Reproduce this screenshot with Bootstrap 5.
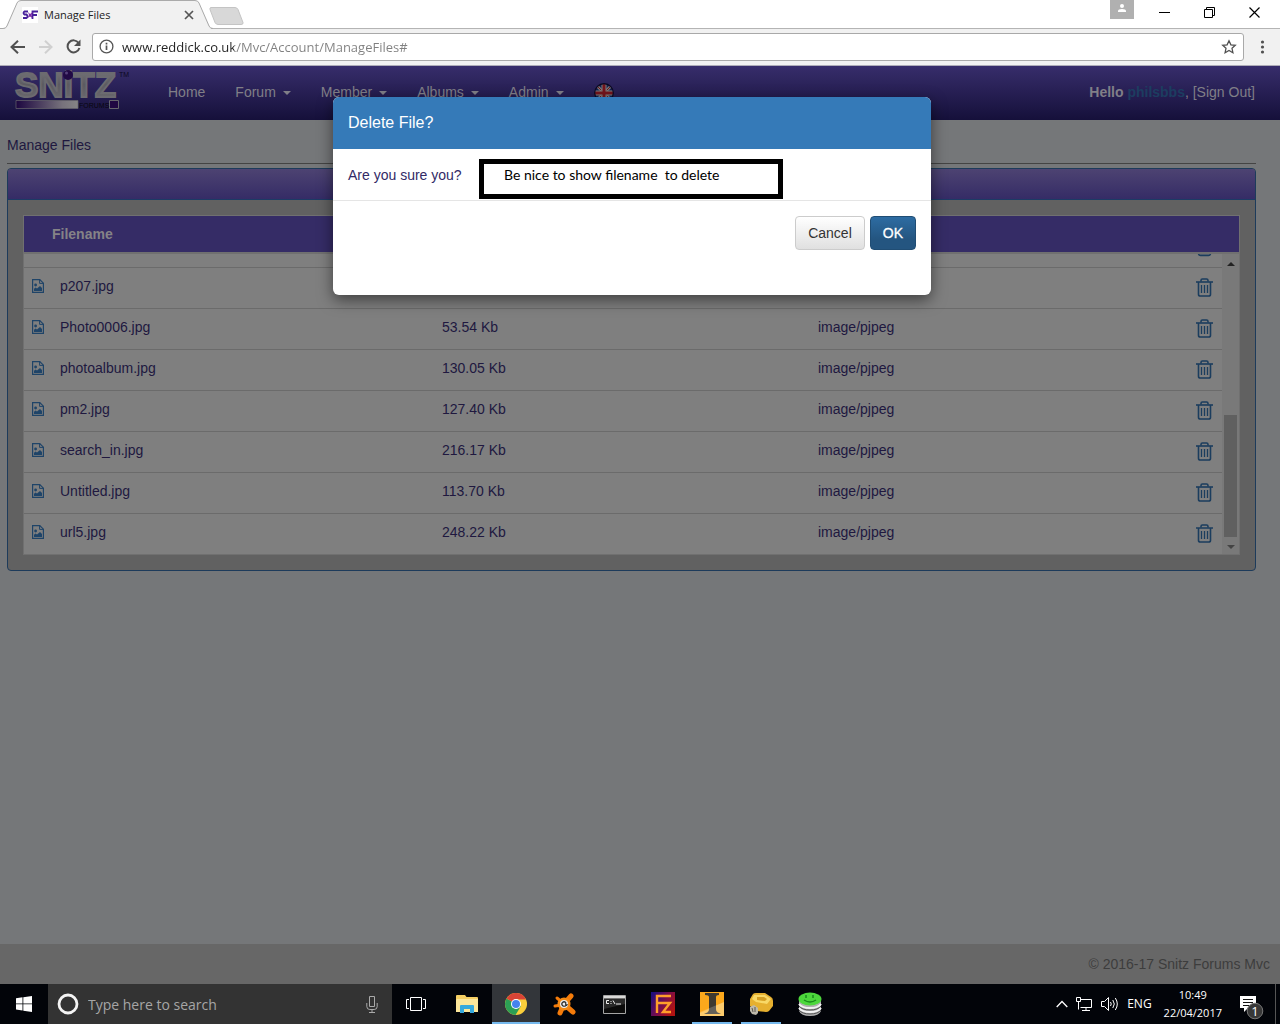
<!DOCTYPE html>
<html lang="en">
<head>
<meta charset="utf-8">
<meta name="viewport" content="width=device-width, initial-scale=1">
<title>Manage Files</title>
<link href="https://cdn.jsdelivr.net/npm/bootstrap@5.3.0/dist/css/bootstrap.min.css" rel="stylesheet">
<style>
body{font:14px/20px "Liberation Sans",Arial,sans-serif;color:#20183f;background:#757779}
svg{display:block;flex:none}
button{font:inherit}
.plain{background:none;border:0;padding:0;color:inherit}
.ui{font-family:"Open Sans","Noto Sans",sans-serif}
/* browser frame */
.tabstrip{height:29px;background:#fff;border-bottom:1px solid #b4b4b4;position:relative}
.tabshape{position:absolute;left:0;top:0}
.tabcontent{position:relative;padding-left:22px;width:194px;height:29px;gap:6px;font-size:11px;color:#222}
.winbtns{padding-right:20px;gap:25px;color:#000}
.winset{gap:34px;padding-bottom:3px}
.profile{background:#b0b0b0;width:24px;height:19px}
.toolbar{height:37px;background:#f1f1f1;border-bottom:1px solid #aeacb8;padding:0 15px 1px 10px}
.navset{gap:13px;padding-right:10px}
.address{height:28px;background:#fff;border:1px solid #a9a9a9;border-radius:3px;padding:0 6px}
.address input{border:0;outline:0;padding:0;font-size:13px;line-height:20px;color:transparent;background:linear-gradient(90deg,#222 112px,#808080 112px);-webkit-background-clip:text;background-clip:text}
/* site */
.sitebar{height:54px;background:linear-gradient(#372d6b,#15103a);padding:0 25px 2px 14px}
.sitebar .logo{margin-right:23px}
.sitebar .logo svg{overflow:visible}
.sitebar .nav-link{color:#807f87;padding:0 15px;line-height:20px}
.sitebar .dropdown-toggle::after{border-top-width:4px;border-left-width:4px;border-right-width:4px;margin-left:7px;vertical-align:2px}
.who,.who a{color:#807f87;text-decoration:none}
.who .user{color:#1c3d60}
.content{padding:15px 24px 0 7px}
.pagehead{font-size:14px;line-height:20px;margin:0;padding-bottom:8px;border-bottom:1px solid #444;font-weight:400}
.panel{border:1px solid #1d3b5b;border-radius:4px;background:#616161;margin-top:4px;overflow:hidden}
.panelbar{height:31px;background:linear-gradient(#4d4372,#352c66);border-bottom:1px solid #1d3b66}
.filebox{margin:15px;border:1px solid #707070;background:#7f7f7f}
.filebox table{margin:0;width:100%;table-layout:fixed}
.filehead{border-bottom:2px solid #707070}
.filehead th{background:#352c66;color:#858387;height:37px;padding:0 0 0 28px}
.filerows td{height:41px;padding:0 8px;border-bottom:1px solid #6b6b6b;line-height:20px;vertical-align:middle}
.filerows td:last-child{padding-right:9px}
.filerows td:not(:last-child){padding-bottom:4px}
.filerows tr:last-child td{border-bottom:0}
.filerows tr.cut td{height:13px;padding-top:0;padding-bottom:0;vertical-align:top}
.c1{width:28px}.c2{width:382px}.c3{width:376px}
.scroller{width:17px;background:#797979;padding:8px 2px 5px}
.thumb{width:13px;height:122px;background:#606060}
.sitefoot{height:40px;background:#676767;color:#3d3d3d;padding-right:10px}
/* dialog */
.dialoglayer{position:absolute;top:31px;left:0;right:0;padding-right:16px;z-index:5}
.dialogbox{max-width:598px;width:100%}
.dialogbox .modal-content{border:0;border-radius:6px;box-shadow:0 5px 15px rgba(0,0,0,.5);min-height:198px;color:#322a66;background:#fff;overflow:hidden}
.dialogbox .modal-header{background:#357ab8;color:#fff;padding:15px;height:52px;border:0;border-radius:0}
.dialogbox .modal-title{font-size:16px;line-height:22px;font-weight:400}
.dialogbox .modal-body{padding:16px 15px 15px;flex:none}
.dialogbox .modal-footer{padding:15px;gap:5px;border-top:1px solid #e5e5e5}
.dialogbox .modal-footer>*{margin:0}
.dialogbox .btn{font-size:14px;line-height:20px;padding:6px 12px;border-radius:4px}
.btn-soft{background:linear-gradient(#fff,#e0e0e0);border:1px solid #ccc;color:#333}
.btn-deep{background:linear-gradient(#2d6ca2,#245580 70%);border:1px solid #204d74;color:#fff;-webkit-text-stroke:.3px #fff}
.note{position:absolute;left:146px;top:62px;width:304px;height:40px;border:5px solid #000;background:#fff;color:#000;font:14px/22px Lato,sans-serif;padding-left:20px;white-space:pre}
/* taskbar */
.taskbar{height:40px;background:#020409;color:#fff}
.startbtn{width:48px}
.searchbox{width:344px;background:#333;gap:9px;padding:0 14px 0 9px}
.searchbox input{background:none;border:0;outline:0;padding:2px 0 0;font-size:14px;color:#fff}
.searchbox input::placeholder{color:#a6a6a6;opacity:1}
.slot{width:48px;height:40px;display:flex;align-items:center;justify-content:center}
.slot.open{background:linear-gradient(#76b9ed,#76b9ed) bottom/40px 2px no-repeat}
.slot.active{background:linear-gradient(#76b9ed,#76b9ed) bottom/48px 2px no-repeat #33363a}
.slots{gap:1px;margin-left:3px}
.tray{gap:8px}
.lang{font-size:12px;padding-right:4px}
.clock{font-size:11px;line-height:18px;padding-right:9px}
.notify{margin-top:8px}
.peek{width:1px;height:40px;background:#555;margin-right:4px}
</style>
<script src="https://cdn.jsdelivr.net/npm/bootstrap@5.3.0/dist/js/bootstrap.bundle.min.js"></script>
</head>
<body class="d-flex flex-column min-vh-100">
<svg width="0" height="0" class="position-absolute">
<defs>
<symbol id="pic" viewBox="0 0 12 14"><path d="M.6.6h7.2l3.6 3.6v9.2H.6z" fill="none" stroke="#1f4468" stroke-width="1.2"/><path d="M7.6.6v3.8h3.8" fill="none" stroke="#1f4468"/><circle cx="3.6" cy="6" r="1.4" fill="#1f4468"/><path d="M2 12V9.8l1.6-1.2 1.4 1L8 7l2 2v3z" fill="#1f4468"/></symbol>
<symbol id="bin" viewBox="0 0 17 19"><g fill="none" stroke="#1b3d5e"><path d="M0 4h17" stroke-width="1.6"/><path d="M5 3.6V2.4Q5 1 6.400 1h4.200Q12 1 12 2.400v1.200M2.500 4v12.200q0 1.800 1.800 1.800h8.400q1.800 0 1.800-1.800V4" stroke-width="1.6"/><path d="M5.500 7v8M8.500 7v8M11.500 7v8" stroke-width="1.300"/></g></symbol>
</defs>
</svg>

<header class="ui">
<div class="tabstrip d-flex justify-content-between">
<svg class="tabshape" width="250" height="29"><path d="M0 28.500h5L17 3Q18 .5 21 .5H195Q198 .5 199 3L211 28.500V29H0z" fill="#f1f1f1"/><path d="M0 28.500h3Q6 28.500 7 26L17 3Q18 .5 21 .5H195Q198 .5 199 3L209 26Q210 28.500 213 28.500" fill="none" stroke="#aaa"/><path d="M211 7.500h24q2 0 3 2l5 13q.5 2-2 2h-23q-2 0-3-2l-5-13q-.5-2 1-2z" fill="#d8d8d8" stroke="#c4c4c4"/></svg>
<div class="tabcontent d-flex align-items-center">
<svg width="16" height="16"><path fill="#fff" d="M0 0h16v16H0z"/><path d="M6 4.500H2.500q-2 1.500 0 3h2q2 2 0 3.500H1M10.500 12V4.500H16M10.500 8H15" fill="none" stroke="#46209a" stroke-width="1.800"/><path d="M6 5l2 2 3-2-1.500 3 1 3-2.500-1.500L5.500 11 7 8z" fill="#7a2aa8"/></svg>
<span class="flex-grow-1 text-truncate">Manage Files</span>
<button class="plain" aria-label="Close tab"><svg width="10" height="10"><path d="M1 1l8 8M9 1L1 9" stroke="#555" stroke-width="1.700"/></svg></button>
</div>
<div class="winbtns d-flex align-items-center">
<button class="plain profile align-self-start" aria-label="Profile"><svg width="24" height="19"><circle cx="12" cy="6" r="2" fill="#fff"/><path d="M8 12v-1q0-2 4-2t4 2v1z" fill="#fff"/></svg></button>
<div class="winset d-flex align-items-center">
<button class="plain" aria-label="Minimise"><svg width="11" height="11"><path d="M0 5.500h11" stroke="#000"/></svg></button>
<button class="plain" aria-label="Restore"><svg width="11" height="11"><path d="M.5 2.500h8v8h-8zM2.500 2.500v-2h8v8h-2" fill="none" stroke="#000"/></svg></button>
<button class="plain" aria-label="Close"><svg width="11" height="11"><path d="M.5.5l10 10M10.500.5l-10 10" stroke="#000" stroke-width="1.200"/></svg></button>
</div>
</div>
</div>
<div class="toolbar d-flex align-items-center">
<div class="navset d-flex align-items-center">
<button class="plain" aria-label="Back"><svg width="15" height="14"><path d="M15 7H2M8 .8L1.500 7 8 13.200" fill="none" stroke="#505050" stroke-width="2"/></svg></button>
<button class="plain" aria-label="Forward"><svg width="15" height="14"><path d="M1 7h12M7 .8L13.500 7 7 13.200" fill="none" stroke="#d0d0d0" stroke-width="2"/></svg></button>
<button class="plain" aria-label="Reload"><svg width="16" height="15"><path d="M12.600 4A6 6 0 1 0 13.400 9" fill="none" stroke="#505050" stroke-width="2"/><path d="M14.500.5V7H8z" fill="#505050"/></svg></button>
</div>
<div class="address d-flex align-items-center flex-grow-1">
<svg width="15" height="15" class="me-2"><circle cx="7.500" cy="7.500" r="6.400" fill="none" stroke="#555" stroke-width="1.300"/><path d="M7.500 6.500V11M7.500 3.700v1.700" stroke="#555" stroke-width="1.700"/></svg>
<input class="ui flex-grow-1" type="text" aria-label="Address" value="www.reddick.co.uk/Mvc/Account/ManageFiles#">
<button class="plain" aria-label="Bookmark"><svg width="16" height="16"><path d="M8 1.800l1.900 4 4.400.5-3.300 3 .9 4.400L8 11.500l-3.900 2.200.9-4.400-3.300-3 4.400-.5z" fill="none" stroke="#505050" stroke-width="1.300"/></svg></button>
</div>
<button class="plain ms-3" aria-label="Menu"><svg width="5" height="14"><g fill="#505050"><circle cx="2.500" cy="2" r="1.600"/><circle cx="2.500" cy="7" r="1.600"/><circle cx="2.500" cy="12" r="1.600"/></g></svg></button>
</div>
</header>

<div class="flex-grow-1 d-flex flex-column position-relative">
<nav class="sitebar d-flex align-items-center">
<a href="#" aria-label="Snitz Forums" class="logo text-decoration-none"><svg width="116" height="44">
<defs><linearGradient id="lg" x1="0" x2="1"><stop stop-color="#1c0640"/><stop offset=".75" stop-color="#77727c"/><stop offset="1" stop-color="#858585"/></linearGradient><linearGradient id="mt" x1="0" x2="0" y1="0" y2="1"><stop stop-color="#7c7b80"/><stop offset=".5" stop-color="#5c5b61"/><stop offset="1" stop-color="#6e6d72"/></linearGradient></defs>
<text x="1" y="27" font-size="35" font-weight="700" font-family="Liberation Sans,Arial,sans-serif" fill="url(#mt)" stroke="#6c6b70" stroke-width="1.800">SNiTZ</text>
<circle cx="54" cy="5" r="5" fill="#220a45"/><circle cx="52.500" cy="3" r="1.500" fill="#55407a"/>
<path fill="url(#lg)" stroke="#67656c" stroke-width=".7" d="M2 30.500h62v8H2z"/><path fill="#210842" stroke="#67656c" d="M95.500 30.500h9v8h-9z"/>
<text x="65" y="38" font-size="7" font-family="Liberation Sans,Arial,sans-serif" fill="#08060f">FORUMS</text>
<text x="105" y="7" font-size="7" font-family="Liberation Sans,Arial,sans-serif" fill="#0c0820">TM</text>
</svg></a>
<ul class="nav flex-nowrap">
<li><a class="nav-link" href="#">Home</a></li>
<li><a class="nav-link dropdown-toggle" href="#">Forum</a></li>
<li><a class="nav-link dropdown-toggle" href="#">Member</a></li>
<li><a class="nav-link dropdown-toggle" href="#">Albums</a></li>
<li><a class="nav-link dropdown-toggle" href="#">Admin</a></li>
<li><a class="nav-link" href="#" aria-label="English"><svg width="20" height="20"><defs><clipPath id="fc"><circle cx="10" cy="11" r="9"/></clipPath></defs><g clip-path="url(#fc)"><path fill="#14204e" d="M0 0h20v20H0z"/><path d="M0 1l20 20M20 1L0 21" stroke="#777" stroke-width="3"/><path d="M0 1l20 20M20 1L0 21" stroke="#74151d"/><path d="M10 0v20M0 11h20" stroke="#808080" stroke-width="5"/><path d="M10 0v20M0 11h20" stroke="#74151d" stroke-width="3"/></g><circle cx="10" cy="11" r="9.300" fill="none" stroke="#0b0920" stroke-width="1.200"/></svg></a></li>
</ul>
<div class="who ms-auto text-nowrap"><b>Hello <a class="user" href="#">philsbbs</a></b>, <a href="#">[Sign Out]</a></div>
</nav>

<main class="content flex-grow-1">
<h1 class="pagehead">Manage Files</h1>
<section class="panel">
<div class="panelbar"></div>
<div class="filebox">
<table class="filehead"><thead><tr><th scope="col">Filename</th></tr></thead></table>
<div class="d-flex">
<table class="filerows flex-grow-1">
<colgroup><col class="c1"><col class="c2"><col class="c3"><col></colgroup>
<tbody id="files">
<tr class="cut"><td></td><td></td><td></td><td><svg class="ms-auto" width="17" height="3"><path d="M2.500 0q.5 1.400 2 1.400h8q1.500 0 2-1.400" fill="none" stroke="#1b3d5e" stroke-width="1.600"/></svg></td></tr>
</tbody>
</table>
<div class="scroller d-flex flex-column align-items-center">
<svg width="8" height="4"><path d="M0 4L4 0l4 4z" fill="#222"/></svg>
<div class="thumb mt-auto"></div>
<svg width="8" height="4" class="mt-2"><path d="M0 0l4 4 4-4z" fill="#444"/></svg>
</div>
</div>
</div>
</section>
</main>
<footer class="sitefoot d-flex align-items-center justify-content-end">© 2016-17 Snitz Forums Mvc</footer>

<div class="dialoglayer d-flex justify-content-center">
<div class="dialogbox position-relative" role="dialog" aria-labelledby="dlgtitle">
<div class="modal-content">
<div class="modal-header"><h2 class="modal-title" id="dlgtitle">Delete File?</h2></div>
<div class="modal-body">Are you sure you?</div>
<div class="modal-footer"><button type="button" class="btn btn-soft">Cancel</button><button type="button" class="btn btn-deep">OK</button></div>
</div>
<div class="note">Be nice to show filename  to delete</div>
</div>
</div>
</div>

<footer class="taskbar ui d-flex align-items-center">
<button class="plain startbtn d-flex justify-content-center" aria-label="Start"><svg width="16" height="16"><path d="M0 2.200L6.500 1.300v6.200H0zM7.300 1.200L16 0v7.500H7.300zM0 8.300h6.500v6.200L0 13.600zM7.300 8.300H16V16l-8.700-1.200z" fill="#fff"/></svg></button>
<div class="searchbox d-flex align-items-center align-self-stretch">
<svg width="22" height="22"><circle cx="11" cy="11" r="9" fill="none" stroke="#f4f4f4" stroke-width="2.800"/></svg>
<input class="flex-grow-1" type="text" placeholder="Type here to search" aria-label="Search">
<svg width="12" height="17"><path d="M3.500.5h5v10h-5zM.8 7v3.500q0 3 3 3h4.400q3 0 3-3V7M6 13.500V16M3 16.500h6" fill="none" stroke="#aaa"/></svg>
</div>
<button class="plain slot" aria-label="Task view"><svg width="20" height="14"><path d="M4.500.5h11v13h-11zM3 2.500H.5v9H3M17 2.500h2.500v9H17" fill="none" stroke="#fff"/></svg></button>
<div class="slots d-flex">
<button class="plain slot" aria-label="File Explorer"><svg width="22" height="18"><path d="M0 1q0-1 1-1h8l1.500 2H21q1 0 1 1v14H0z" fill="#f5cf63"/><path d="M1 4h21v13H0V5z" fill="#fde79b"/><path d="M4 18v-7q0-1 1-1h12q1 0 1 1v7h-4v-4H8v4z" fill="#37a9dd"/></svg></button>
<button class="plain slot active" aria-label="Chrome"><svg width="22" height="22"><circle cx="11" cy="11" r="11" fill="#fbcf3b"/><path d="M11 11L1.500 5.500A11 11 0 0 0 10.500 22L16 13z" fill="#2c9f54"/><path d="M11 11L1.500 5.500A11 11 0 0 1 21 6.500H11z" fill="#d94436"/><circle cx="11" cy="11" r="5" fill="#fff"/><circle cx="11" cy="11" r="4" fill="#4583ec"/></svg></button>
<button class="plain slot" aria-label="Avast"><svg width="24" height="24"><g stroke="#f47b0a" stroke-linecap="round" fill="none"><path d="M11 12L18 4M12 13l8 7M10 14l-3 7" stroke-width="5"/><path d="M10 11L4 6M9 13l-7 1" stroke-width="3"/></g><circle cx="11" cy="12" r="6.500" fill="#f58a14"/><circle cx="11" cy="12" r="4" fill="#ececec"/><path d="M13 13.500q-2 1.500-3.500 0t0-3 3.200 0V13q1.300 1 1.500-1" fill="none" stroke="#333" stroke-width="1.200"/></svg></button>
<button class="plain slot" aria-label="Command Prompt"><svg width="23" height="19"><path d="M.5.5h22v18H.5z" fill="#0b0b0b" stroke="#a5a5a5"/><path d="M1 1h21v2.500H1z" fill="#d9d9d9"/><path d="M1 4h21v5L1 14z" fill="#292929"/><path d="M6 5.500H3.500v3H6M8 6v1m0 1v1M10 5.500l2 3.500M13 9h5" fill="none" stroke="#eee"/></svg></button>
<button class="plain slot" aria-label="FileZilla"><svg width="24" height="24"><defs><linearGradient id="fz" x1="0" y1="0" x2="1" y2=".6"><stop stop-color="#130e83"/><stop offset=".6" stop-color="#7a0d4a"/><stop offset="1" stop-color="#b01313"/></linearGradient></defs><path fill="url(#fz)" d="M0 0h24v24H0z"/><path d="M6 21V4h14M6 11h13l-7 9h8" fill="none" stroke="#ff9e2a" stroke-width="2.400"/></svg></button>
<button class="plain slot open" aria-label="Editor"><svg width="24" height="24"><path fill="#fba81c" d="M0 0h24v24H0z"/><path fill="#fcc95c" d="M0 21L24 10v14H0z" opacity=".7"/><path d="M5 1h14v2q-3 0-3 2v12q0 3 3 4l2 1H4l2-1q3-1 3-4V5q0-2-4-2z" fill="#3d3930"/><path fill="#fff" opacity=".2" d="M0 20L24 10v14H0z"/></svg></button>
<button class="plain slot open" aria-label="Disk tool"><svg width="24" height="22"><path d="M1 6L4 1q1-1 3-1h9l6 4q2 1 2 4v5l-4 5q-1 1-3 1L7 18 1 13z" fill="#e6b02f"/><path d="M5 2h11l6 4-4 5L7 9 3 6z" fill="#f8d867"/><path d="M8 4h7l3 2-2 2-8-1z" fill="#d49e22"/><path d="M1 14l4-2 4 3v5l-2 2-4-1-2-3z" fill="#bdb9aa"/><path d="M3 15l1 4M6 14v5" stroke="#5b564d"/></svg></button>
<button class="plain slot" aria-label="Database"><svg width="24" height="24"><path d="M1 7h22v12q-2 5-11 5T1 19z" fill="#b0b0b0"/><path d="M1 12q3 4 11 4t11-4M1 16q3 4 11 4t11-4" fill="none" stroke="#f2f2f2" stroke-width="2"/><path d="M1 14q3 4 11 4t11-4M1 18q3 4 11 4t11-4" fill="none" stroke="#555"/><ellipse cx="12" cy="7" rx="11.500" ry="6.500" fill="#4dd83c"/><path d="M8 3v3M15 3v3M6 8q6 4 12 0" fill="none" stroke="#188a1b" stroke-width="1.500"/></svg></button>
</div>
<div class="tray ms-auto d-flex align-items-center">
<svg width="12" height="8"><path d="M.7 7L6 1.500 11.300 7" fill="none" stroke="#fff" stroke-width="1.300"/></svg>
<svg width="17" height="14"><path d="M4.500 2.500H15.500v8H4.500M10 10.500v3M6 13.500h8M.5.500h4v4h-4zM2.500 4.500v8" fill="none" stroke="#fff"/></svg>
<svg width="18" height="14"><path d="M.5 4.500h3l4-4v13l-4-4h-3z" fill="none" stroke="#fff"/><path d="M9.500 5q1.500 2 0 4M11.800 3q3 4 0 8M14.300 1q4 6 0 12" fill="none" stroke="#fff"/></svg>
<span class="lang">ENG</span>
<div class="clock text-center">10:49<br>22/04/2017</div>
<svg class="notify" width="28" height="26"><path d="M1 1h16v12H9l-4 4v-4H1z" fill="#fff"/><path d="M4 4.500h10M4 7.500h10M4 10.500h6" stroke="#111"/><circle cx="16" cy="16" r="7.800" fill="#383838" stroke="#777"/><text x="16" y="21" font-size="13" text-anchor="middle" fill="#fff">1</text></svg>
<div class="peek"></div>
</div>
</footer>
<script>
const files=[["p207.jpg",""],["Photo0006.jpg","53.54 Kb"],["photoalbum.jpg","130.05 Kb"],["pm2.jpg","127.40 Kb"],["search_in.jpg","216.17 Kb"],["Untitled.jpg","113.70 Kb"],["url5.jpg","248.22 Kb"]];
const body=document.getElementById("files");
for(const [name,size] of files){
  body.insertAdjacentHTML("beforeend",`<tr><td><svg width="12" height="14"><use href="#pic"/></svg></td><td>${name}</td><td>${size}</td><td><div class="d-flex align-items-center justify-content-between"><span class="pb-1">${size?"image/pjpeg":""}</span><button class="plain" aria-label="Delete ${name}"><svg width="17" height="19"><use href="#bin"/></svg></button></div></td></tr>`);
}
</script>
</body>
</html>
